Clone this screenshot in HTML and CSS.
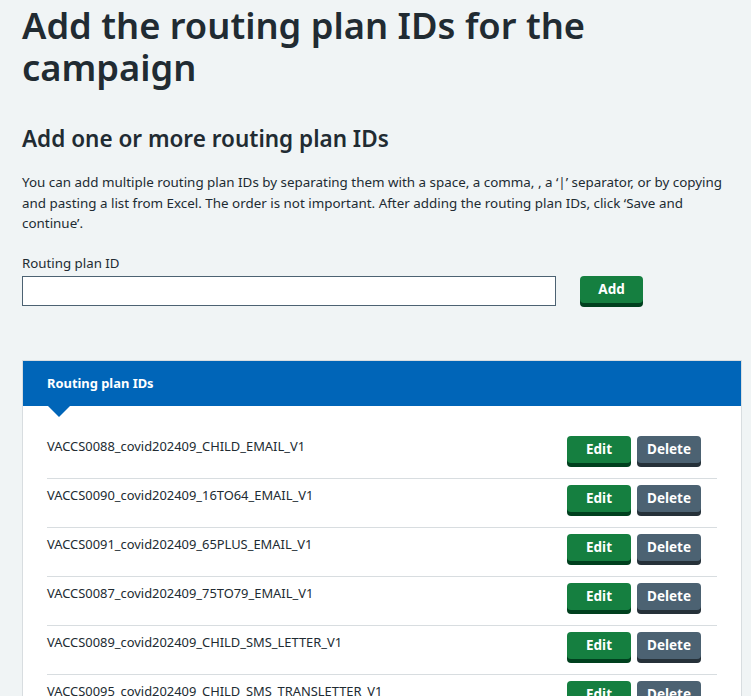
FILE: index.html
```html
<!DOCTYPE html>
<html lang="en">
<head>
<meta charset="utf-8">
<title>Add the routing plan IDs for the campaign</title>
<link rel="stylesheet" href="styles.css">
</head>
<body>
<main class="page">
  <h1 class="title">Add the routing plan IDs for the campaign</h1>
  <h2 class="subtitle">Add one or more routing plan IDs</h2>
  <p class="intro">You can add multiple routing plan IDs by separating them with a space, a comma, , a ‘|’ separator, or by copying and pasting a list from Excel. The order is not important. After adding the routing plan IDs, click ‘Save and continue’.</p>
  <form class="add-form">
    <label class="label" for="rp">Routing plan ID</label>
    <div class="add-row">
      <input class="input" id="rp" type="text">
      <button class="btn btn-green btn-add" type="button">Add</button>
    </div>
  </form>
  <section class="card">
    <div class="card-head">
      <h3 class="card-title">Routing plan IDs</h3>
      <span class="pointer"></span>
    </div>
    <ul class="list">
      <li class="row"><span class="row-text">VACCS0088_covid202409_CHILD_EMAIL_V1</span><span class="actions"><button class="btn btn-green">Edit</button><button class="btn btn-grey">Delete</button></span></li>
      <li class="row"><span class="row-text">VACCS0090_covid202409_16TO64_EMAIL_V1</span><span class="actions"><button class="btn btn-green">Edit</button><button class="btn btn-grey">Delete</button></span></li>
      <li class="row"><span class="row-text">VACCS0091_covid202409_65PLUS_EMAIL_V1</span><span class="actions"><button class="btn btn-green">Edit</button><button class="btn btn-grey">Delete</button></span></li>
      <li class="row"><span class="row-text">VACCS0087_covid202409_75TO79_EMAIL_V1</span><span class="actions"><button class="btn btn-green">Edit</button><button class="btn btn-grey">Delete</button></span></li>
      <li class="row"><span class="row-text">VACCS0089_covid202409_CHILD_SMS_LETTER_V1</span><span class="actions"><button class="btn btn-green">Edit</button><button class="btn btn-grey">Delete</button></span></li>
      <li class="row"><span class="row-text">VACCS0095_covid202409_CHILD_SMS_TRANSLETTER_V1</span><span class="actions"><button class="btn btn-green">Edit</button><button class="btn btn-grey">Delete</button></span></li>
    </ul>
  </section>
</main>
</body>
</html>
```

FILE: styles.css
```css
* { box-sizing: border-box; }
html, body { margin: 0; padding: 0; }
body {
  background: #f0f4f5;
  color: #212b32;
  font-family: "Noto Sans", "Open Sans", sans-serif;
}
.page {
  width: 742px;
  padding: 0 0 0 22px;
}
.title {
  font-size: 36.3px;
  line-height: 42px;
  font-weight: 600;
  margin: 4px 0 0;
}
.subtitle {
  font-size: 22.5px;
  line-height: 30px;
  font-weight: 600;
  margin: 36px 0 0;
}
.intro {
  font-size: 13.4px;
  line-height: 20.5px;
  margin: 18px 0 0;
}
.add-form { margin-top: 19px; }
.label {
  display: block;
  font-size: 13.3px;
  line-height: 20px;
}
.add-row {
  display: flex;
  align-items: flex-start;
  margin-top: 3px;
}
.input {
  width: 534px;
  height: 30px;
  border: 1px solid #4c6272;
  background: #fff;
  margin: 0;
  padding: 0 6px;
  font: inherit;
}
.btn {
  font-family: inherit;
  font-size: 13.5px;
  font-weight: 700;
  color: #fff;
  border: 0;
  border-radius: 4px;
  width: 64px;
  height: 27px;
  padding: 0;
  margin: 0;
  line-height: 27px;
}
.btn-green { background: #157f40; box-shadow: 0 4px 0 #00401e; }
.btn-grey { background: #4c6272; box-shadow: 0 4px 0 #263139; }
.btn-add { margin-left: 24px; height: 27px; width: 63px; }
.card {
  margin-top: 54px;
  background: #fff;
  border: 1px solid #d8dde0;
  border-bottom: 0;
}
.card-head {
  position: relative;
  background: #0065b8;
  height: 45px;
  padding-left: 24px;
  display: flex;
  align-items: center;
}
.card-title {
  margin: 0;
  color: #fff;
  font-size: 12.9px;
  font-weight: 700;
}
.pointer {
  position: absolute;
  left: 25px;
  top: 45px;
  width: 0;
  height: 0;
  border-left: 11px solid transparent;
  border-right: 11px solid transparent;
  border-top: 11px solid #0065b8;
}
.list {
  list-style: none;
  margin: 0;
  padding: 24px 24px 0 24px;
}
.row {
  display: flex;
  justify-content: space-between;
  align-items: flex-start;
  padding: 6px 16px 15px 0;
  border-bottom: 1px solid #d8dde0;
}
.row-text {
  font-size: 12.9px;
  line-height: 20px;
}
.actions { display: flex; gap: 6px; }
```
